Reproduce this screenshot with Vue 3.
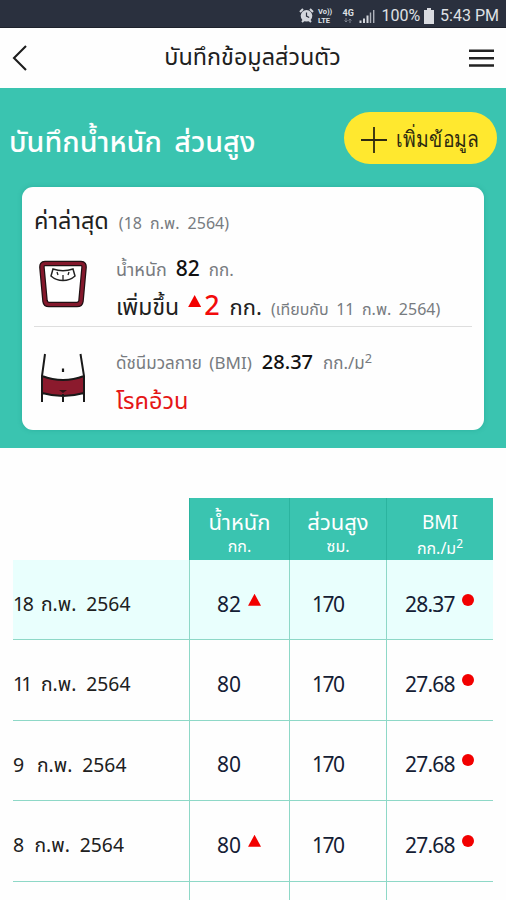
<script setup>
const rows = [
  { day: '18', date: 'ก.พ. 2564', weight: '82', up: true, height: '170', bmi: '28.37', dayWidth: 27, tracking: -1.5 },
  { day: '11', date: 'ก.พ. 2564', weight: '80', up: false, height: '170', bmi: '27.68', dayWidth: 27, tracking: -3 },
  { day: '9', date: 'ก.พ. 2564', weight: '80', up: false, height: '170', bmi: '27.68', dayWidth: 23, tracking: 0 },
  { day: '8', date: 'ก.พ. 2564', weight: '80', up: true, height: '170', bmi: '27.68', dayWidth: 20.5, tracking: 0 }
]
</script>

<template>
  <div class="screen">
    <div class="status">
      <svg class="alarm" width="15" height="15" viewBox="0 0 15 15">
        <circle cx="7.5" cy="7.8" r="5.8" fill="#d3d6dc" />
        <path d="M1 4 4 1M14 4 11 1M3 14l2-2M12 14l-2-2" stroke="#d3d6dc" stroke-width="2" />
        <path d="M7.5 4.5v3.6l2.7 1.4" fill="none" stroke="#2b303e" stroke-width="1.2" />
      </svg>
      <span class="volte"><b>Vo))</b><b>LTE</b></span>
      <span class="net"><b>4G</b>
        <svg width="8" height="5" viewBox="0 0 8 5"><path d="M2 0v4M.5 2.500 2 4l1.500-1.500M6 5V1M4.500 2.500 6 1l1.500 1.500" fill="none" stroke="#7d828e" /></svg>
      </span>
      <svg class="signal" width="16" height="14" viewBox="0 0 16 14">
        <path d="M1.5 14v-2.5M5 14V9.5M8.5 14V6.5" stroke="#d3d6dc" stroke-width="2" />
        <path d="M11.5 14V3.5M14.7 14V1" stroke="#aeb2bb" stroke-width="1.4" />
      </svg>
      <span class="pct">100%</span>
      <svg class="battery" width="10" height="16" viewBox="0 0 10 16">
        <path d="M3 0h4v2h3v14H0V2h3z" fill="#d9dbe0" />
      </svg>
      <span class="clock">5:43 PM</span>
    </div>

    <header class="bar">
      <svg class="back" width="16" height="28" viewBox="0 0 16 28">
        <path d="M14 2 2 14l12 12" fill="none" stroke="#1d1d1d" stroke-width="2.1" />
      </svg>
      <h1>บันทึกข้อมูลส่วนตัว</h1>
      <svg class="menu" width="25" height="18" viewBox="0 0 25 18">
        <path d="M0 1.8h25M0 9.2h25M0 16.5h25" stroke="#222" stroke-width="2.4" />
      </svg>
    </header>

    <section class="hero">
      <div class="hero-head">
        <h2>บันทึกน้ำหนัก ส่วนสูง</h2>
        <button class="add">
          <svg width="26" height="26" viewBox="0 0 26 26">
            <path d="M13 0v26M0 13h26" stroke="#2e2a10" stroke-width="1.8" />
          </svg>
          <span>เพิ่มข้อมูล</span>
        </button>
      </div>

      <div class="card">
        <div class="latest"><span class="big">ค่าล่าสุด</span><span class="muted w0">(18 ก.พ. 2564)</span></div>
        <div class="item weight">
          <svg class="icon" width="48" height="48" viewBox="0 0 48 48">
            <path d="M6 3.5H42Q45.500 3.500 45 8L42 41Q41.500 44.500 38 44.500H10Q6.500 44.500 6 41L3 8Q2.500 3.500 6 3.500Z" fill="#fff" stroke="#211013" stroke-width="5.600" />
            <path d="M6 3.500H42Q45.500 3.500 45 8L42 41Q41.500 44.500 38 44.500H10Q6.500 44.500 6 41L3 8Q2.500 3.500 6 3.500Z" fill="none" stroke="#84182c" stroke-width="3.200" />
            <path d="M14 9Q24 12.500 34 9L36 16Q31 20.500 24 20.500T12 16Z" fill="none" stroke="#222" stroke-width="1.500" />
            <path d="M24 15v5M18 12l1 3M30 12l-1 3" stroke="#222" stroke-width="1.300" />
          </svg>
          <div class="lines">
            <div class="line first"><span class="muted w1">น้ำหนัก</span><span class="value v1">82</span><span class="muted w2">กก.</span></div>
            <div class="line second"><span class="big w3">เพิ่มขึ้น</span><i class="tri"></i><span class="red-num">2</span><span class="big w4">กก.</span><span class="muted w5">(เทียบกับ 11 ก.พ. 2564)</span></div>
          </div>
        </div>
        <div class="item bmi">
          <svg class="icon" width="48" height="50" viewBox="0 0 48 50">
            <path d="M3 23Q24 31 45 23V40Q34 43 24 43 14 43 3 40Z" fill="#8b1a2d" />
            <path d="M6 1 3 23V49M41.500 1 45 23V49M24 41V49M3 23Q24 31 45 23M3 40Q14 43 24 43 34 43 45 40" fill="none" stroke="#191919" stroke-width="2" />
            <path d="M20 37h8l-4 3z" fill="#301015" />
            <path d="M24 15.500v3.500" stroke="#191919" stroke-width="2.200" />
          </svg>
          <div class="lines">
            <div class="line"><span class="muted w6">ดัชนีมวลกาย (BMI)</span><span class="value v2">28.37</span><span class="muted w7">กก./ม<sup>2</sup></span></div>
            <div class="line result"><span>โรคอ้วน</span></div>
          </div>
        </div>
      </div>
    </section>

    <section class="table">
      <div class="row head">
        <div class="blank"></div>
        <div class="th"><span class="t1">น้ำหนัก</span><small>กก.</small></div>
        <div class="th"><span class="t2">ส่วนสูง</span><small>ซม.</small></div>
        <div class="th"><span class="t3">BMI</span><small>กก./ม<sup>2</sup></small></div>
      </div>
      <div v-for="(r, i) in rows" :key="r.day" class="row" :class="{ active: i === 0 }">
        <div class="date"><span class="day" :style="{ width: r.dayWidth + 'px', letterSpacing: r.tracking + 'px' }">{{ r.day }}</span><span class="month">{{ r.date }}</span></div>
        <div class="cell kg"><span>{{ r.weight }}</span><i v-if="r.up" class="tri"></i></div>
        <div class="cell cm"><span>{{ r.height }}</span></div>
        <div class="cell index"><span>{{ r.bmi }}</span><i class="dot"></i></div>
      </div>
      <div class="row"><div></div><div class="cell"></div><div class="cell"></div><div class="cell"></div></div>
    </section>
  </div>
</template>

<style>
html, body { margin: 0; background: #fff; overflow: hidden; }
</style>

<style scoped>
.screen { width: 506px; height: 900px; overflow: hidden; background: #fefefe; font-family: "Noto Sans", "Noto Sans Thai", "Open Sans", sans-serif; color: #202020; }
.screen * { box-sizing: border-box; }
span, h1, h2 { white-space: nowrap; }
h1, h2 { margin: 0; font-weight: 400; }
i { display: block; flex: none; font-style: normal; }
svg { flex: none; display: block; }

.status { display: flex; align-items: center; height: 28px; padding: 4px 7px 0 299px; background: #2a303e; color: #dfe1e5; font-family: Roboto, sans-serif; border-bottom: 1px solid #1e222c; }
.volte { display: grid; width: 16px; margin-left: 4px; font-size: 7.5px; line-height: 9px; }
.net { display: grid; width: 13px; margin-left: 9px; font-size: 9px; line-height: 10px; justify-items: center; }
.signal { margin-left: 5px; }
.pct { margin-left: 6px; font-size: 16px; }
.battery { margin-left: 4px; }
.clock { margin-left: 6px; font-size: 16px; }

.bar { display: grid; grid-template-columns: 28px 1fr 25px; align-items: center; height: 60px; padding: 0 12px; background: #fefefe; }
.bar h1 { font-size: 23.4px; text-align: center; line-height: 30px; margin: -4px 4px 0 0; }

.hero { height: 360px; background: #3ac4b0; padding: 24px 9px 0; }
.hero-head { display: flex; justify-content: space-between; align-items: center; height: 52px; }
.hero-head h2 { color: #fff; font-size: 28.7px; line-height: 40px; font-weight: 500; padding-top: 5px; word-spacing: 5px; }
.add { display: flex; align-items: center; width: 153px; height: 52px; padding: 3px 0 0 17px; border: 0; border-radius: 26px; background: #ffe82f; color: #2e2a10; font: 400 22px "Noto Sans", sans-serif; gap: 9px; }
.add span { transform: scaleX(.88); transform-origin: left; }

.card { width: 462px; height: 243px; margin: 23px 0 0 13px; padding: 16px 12px 0; border-radius: 11px; background: #fefefe; box-shadow: 0 0 5px #168b7b55; }
.latest { display: flex; align-items: baseline; gap: 10px; height: 51px; line-height: 34px; }
.big { font-size: 23.5px; color: #202020; }
.muted { font-size: 17px; color: #777b80; }
.w0 { font-size: 16px; word-spacing: 4px; }
.item { display: flex; }
.weight { height: 73px; border-bottom: 1px solid #dedede; }
.icon { margin: 6px 0 0 5px; }
.lines { margin-left: 29px; }
.line { display: flex; align-items: baseline; height: 36px; line-height: 30px; }
.first { margin-top: -1px; height: 37px; }
.value { font-size: 21px; font-weight: 500; color: #111; }
.w1 { font-size: 18px; }
.v1, .w2 { margin-left: 9px; }
.w3 { font-size: 23px; }
.tri { width: 13px; height: 12px; background: #f20000; clip-path: polygon(50% 0, 100% 100%, 0 100%); }
.second .tri { margin-left: 9px; align-self: flex-start; margin-top: 5px; }
.red-num { margin-left: 3px; font-size: 27px; font-weight: 500; color: #f20b0b; }
.w4 { margin-left: 10px; font-size: 22px; }
.w5 { margin-left: 9px; font-size: 16px; word-spacing: 3.4px; }
.w6 { word-spacing: 3px; }
.v2 { margin-left: 10px; font-size: 20px; }
.w7 { margin-left: 10px; }
.bmi { padding-top: 20px; }
.result { font-size: 23.5px; color: #e51616; line-height: 35px; }
sup { font-size: .75em; line-height: 0; vertical-align: .5em; }

.table { margin: 50px 13px 0; }
.row { display: grid; grid-template-columns: 176px 100px 97px 107px; height: 80.4px; border-bottom: 1px solid #8ed8c7; }
.row > div { border-left: 1px solid #8ed8c7; }
.row > div:first-child { border-left: 0; }
.row.head { height: 62px; border: 0; }
.th { display: grid; grid-template-rows: 34px 20px; align-content: start; justify-items: center; align-items: center; height: 62px; padding-top: 6px; background: #3ac4b0; color: #fff; font-size: 22px; line-height: 30px; }
.row.head .th { border-color: #2bb49f; }
.row.head .blank { border-left: 0; }
.th small { font-size: 16px; line-height: 20px; white-space: nowrap; margin-top: -5px; }
.th .t3 { font-size: 19px; padding-top: 2px; }
.th .t3 + small { margin-top: -1px; }
.active { background: #e9fffd; }
.date { display: flex; align-items: baseline; font-size: 19.5px; line-height: 28px; padding: 30px 0 0; }
.day { flex: none; }
.month { font-size: 19.3px; word-spacing: 5px; margin-left: 1px; }
.cell { display: flex; align-items: center; font-size: 21px; color: #142034; padding-top: 8px; }
.kg { padding-left: 27px; gap: 7px; }
.cm { padding-left: 22px; letter-spacing: -1.5px; }
.index { padding-left: 18px; }
.index span { width: 57px; letter-spacing: -.8px; }
.cell .tri { margin-top: -8px; }
.dot { width: 12px; height: 12px; border-radius: 50%; background: #f20000; margin-top: -8px; }
</style>
